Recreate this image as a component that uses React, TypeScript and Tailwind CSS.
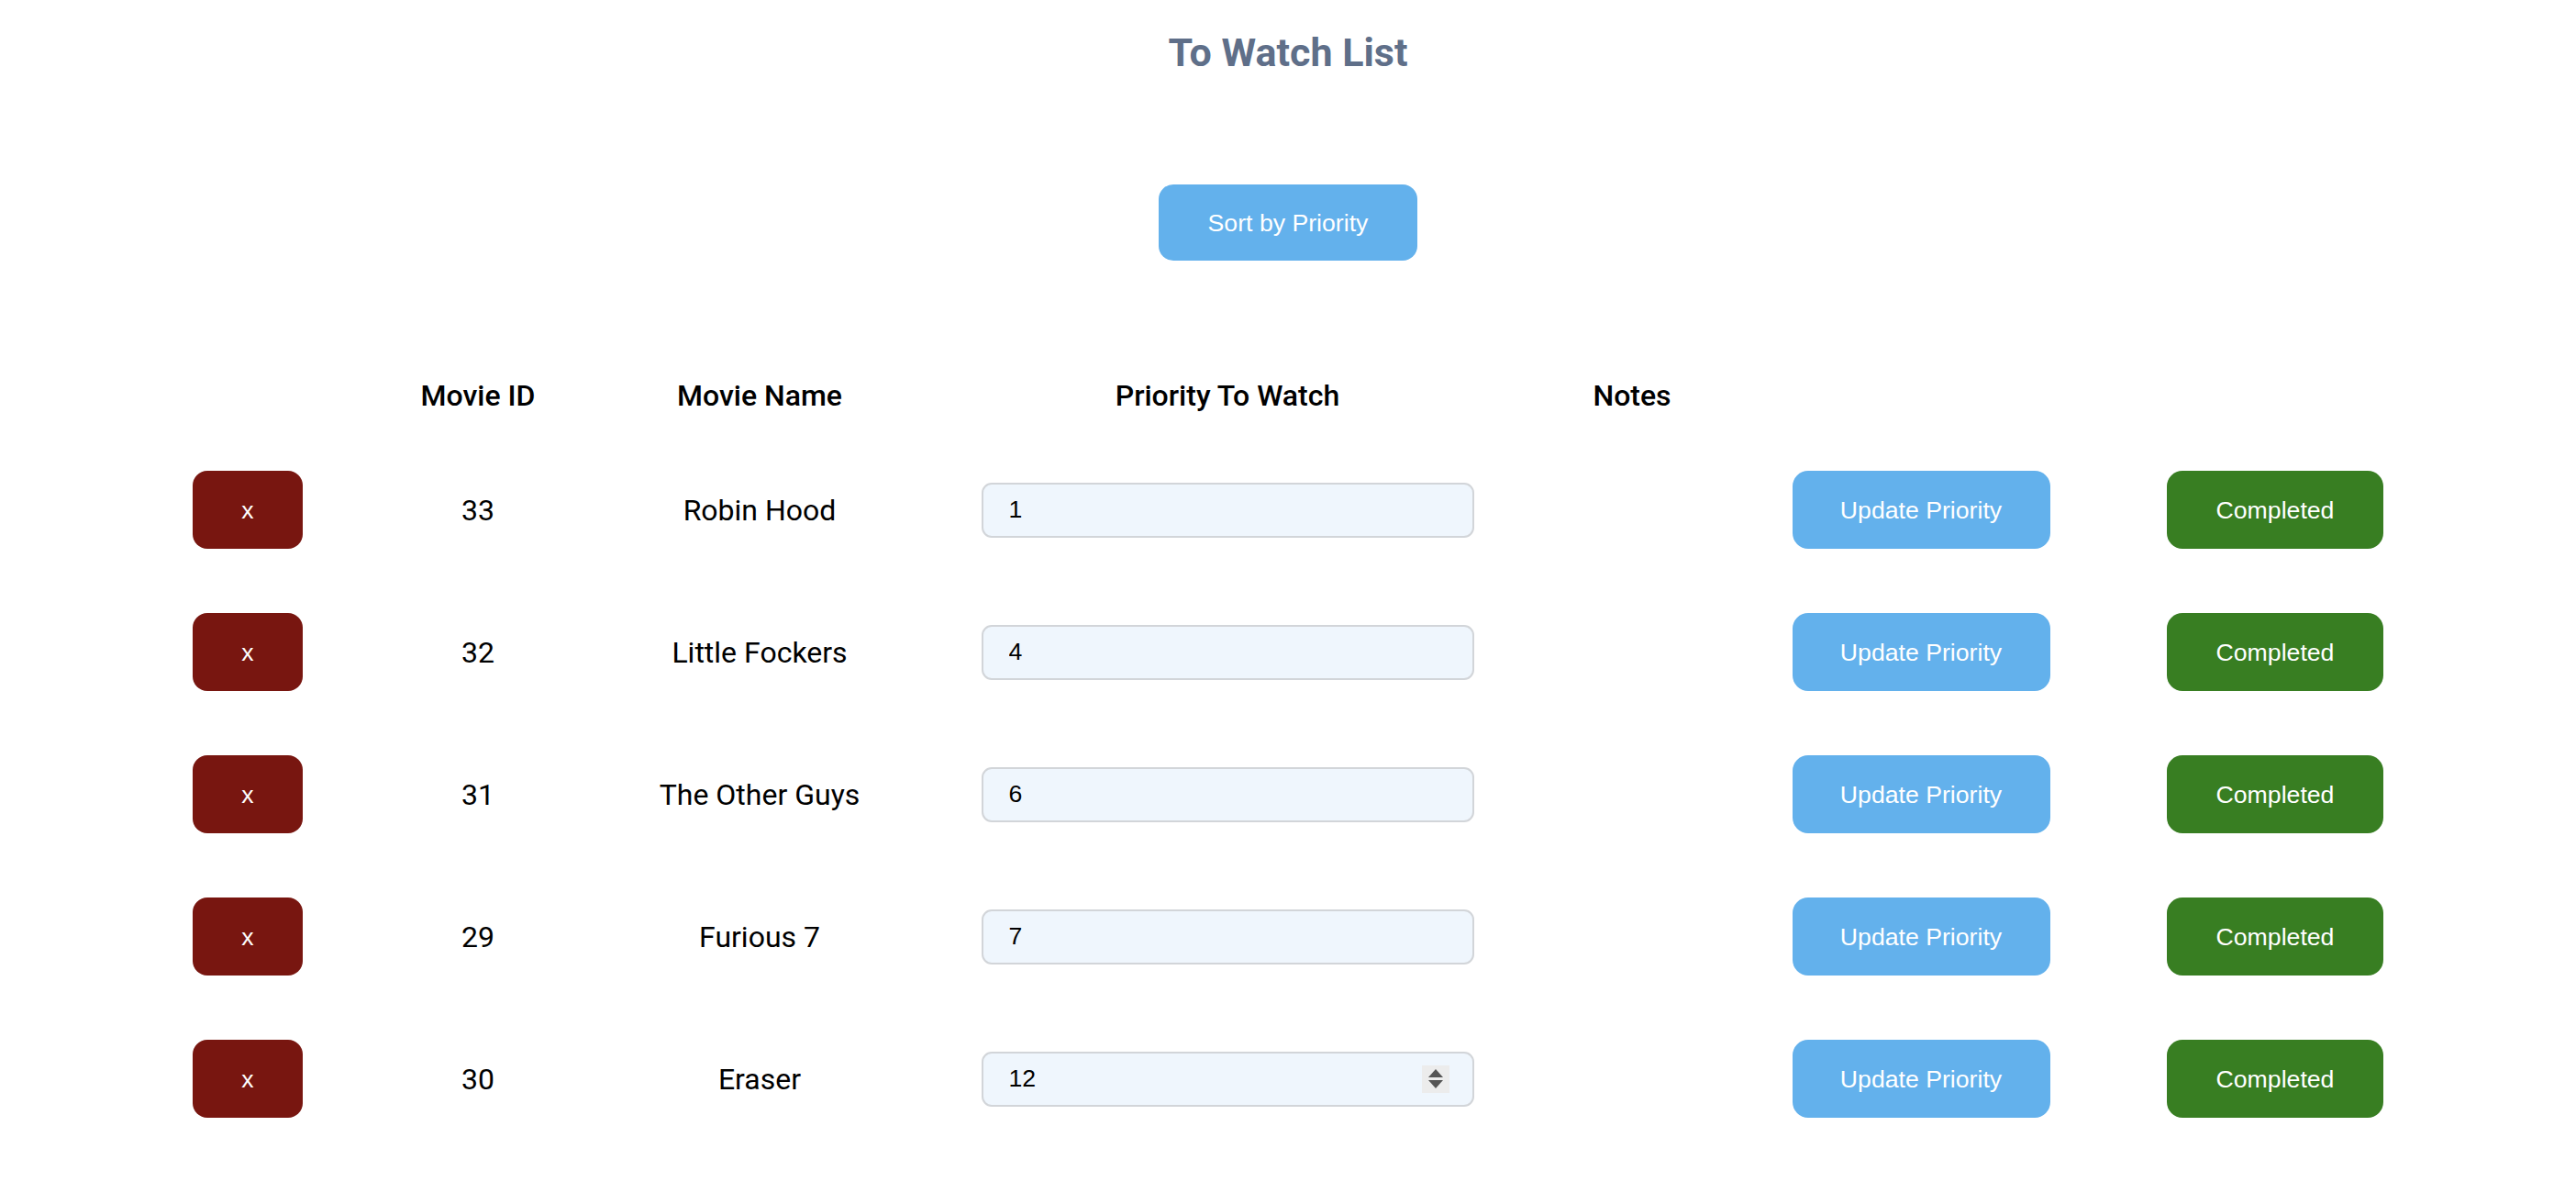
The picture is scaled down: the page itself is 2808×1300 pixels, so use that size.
import React from "react";

const movies = [
  { id: 33, name: "Robin Hood", priority: "1" },
  { id: 32, name: "Little Fockers", priority: "4" },
  { id: 31, name: "The Other Guys", priority: "6" },
  { id: 29, name: "Furious 7", priority: "7" },
  { id: 30, name: "Eraser", priority: "12" },
];

const gridCols = "grid grid-cols-[120px_382px_232px_788px_94px_536px_236px] items-center";

export default function App() {
  return (
    <div className="min-h-[1300px] w-full bg-white" style={{ fontFamily: "Roboto, Inter, 'Noto Sans', sans-serif" }}>
      <h1 className="pt-[31px] text-center text-[43px] font-bold leading-[52px] text-[#5f6f89]">
        To Watch List
      </h1>
      <div className="mt-[118px] flex justify-center">
        <button
          className="h-[83px] w-[282px] rounded-[16px] bg-[#63b1ec] text-[26.67px] text-white"
          style={{ fontFamily: "'Liberation Sans', Arial, sans-serif" }}
        >
          Sort by Priority
        </button>
      </div>
      <div className="mx-auto mt-[99px] w-[2388px]">
        <div className={`${gridCols} h-[95px] whitespace-nowrap text-center text-[32px] font-medium text-black`}>
          <div />
          <div>Movie ID</div>
          <div>Movie Name</div>
          <div>Priority To Watch</div>
          <div>Notes</div>
          <div />
          <div />
        </div>
        {movies.map((m, i) => (
          <div key={m.id} className={`${gridCols} h-[155px] whitespace-nowrap text-center text-[32px] text-black`}>
            <div>
              <button
                className="h-[85px] w-[120px] rounded-[16px] bg-[#781610] text-[26.67px] text-white"
                style={{ fontFamily: "'Liberation Sans', Arial, sans-serif" }}
              >
                x
              </button>
            </div>
            <div>{m.id}</div>
            <div>{m.name}</div>
            <div className="flex justify-center">
              <div className="relative">
                <input
                  type="text"
                  readOnly
                  value={m.priority}
                  className="h-[60px] w-[537px] rounded-[11px] border-2 border-[#d2d5d9] bg-[#eff6fd] pl-[28px] text-left text-[26.67px] text-black outline-none"
                  style={{ fontFamily: "'Liberation Sans', Arial, sans-serif" }}
                />
                {i === movies.length - 1 && (
                  <div className="absolute right-[27px] top-[15px] flex h-[30px] w-[30px] flex-col items-center justify-center gap-[3px] bg-[#ececec]">
                    <svg width="16" height="9" viewBox="0 0 16 9">
                      <polygon points="8,0 16,9 0,9" fill="#555555" />
                    </svg>
                    <svg width="16" height="9" viewBox="0 0 16 9">
                      <polygon points="0,0 16,0 8,9" fill="#555555" />
                    </svg>
                  </div>
                )}
              </div>
            </div>
            <div />
            <div className="flex justify-center">
              <button
                className="h-[85px] w-[281px] rounded-[17px] bg-[#63b1ec] text-[26.67px] text-white"
                style={{ fontFamily: "'Liberation Sans', Arial, sans-serif" }}
              >
                Update Priority
              </button>
            </div>
            <div>
              <button
                className="h-[85px] w-[236px] rounded-[17px] bg-[#387e22] text-[26.67px] text-white"
                style={{ fontFamily: "'Liberation Sans', Arial, sans-serif" }}
              >
                Completed
              </button>
            </div>
          </div>
        ))}
      </div>
    </div>
  );
}
